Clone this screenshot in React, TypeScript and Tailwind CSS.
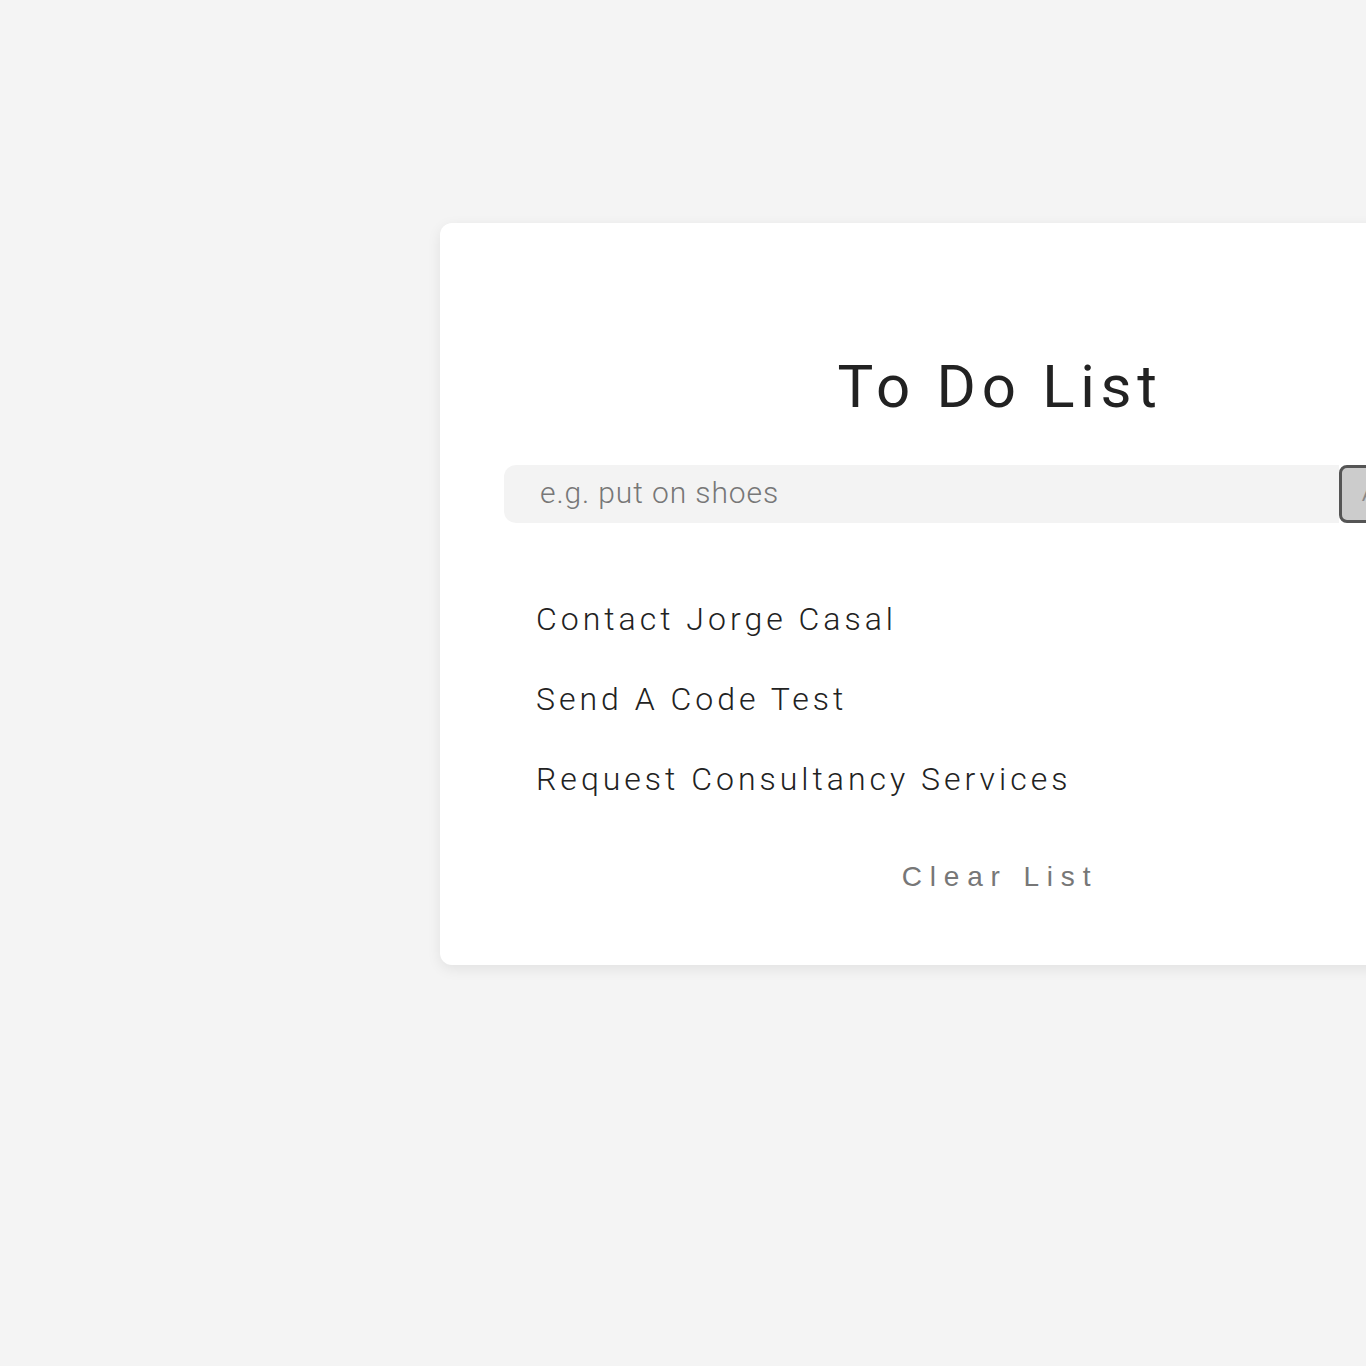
import { useState } from 'react'

const initialItems = ['Contact Jorge Casal', 'Send A Code Test', 'Request Consultancy Services']

export default function App() {
  const [items, setItems] = useState<string[]>(initialItems)
  const [text, setText] = useState('')

  const addItem = () => {
    if (!text.trim()) return
    setItems([...items, text.trim()])
    setText('')
  }

  return (
    <div className="min-h-screen overflow-hidden bg-[#f4f4f4] pl-[440px] pt-[223px] font-['Roboto',sans-serif]">
      <div className="flex w-[1120px] flex-col rounded-xl bg-white px-16 pt-[134px] pb-[74px] shadow-[0_4px_14px_rgba(0,0,0,0.08)]">
        <h1 className="text-center text-[60px] leading-none font-normal tracking-[0.095em] text-[#222]">To Do List</h1>

        <div className="mt-[48px] flex h-[58px]">
          <input
            value={text}
            onChange={(e) => setText(e.target.value)}
            onKeyDown={(e) => e.key === 'Enter' && addItem()}
            placeholder="e.g. put on shoes"
            className="h-full flex-1 rounded-l-xl bg-[#f3f3f3] px-9 pb-1 text-[30px] font-light tracking-[0.03em] text-[#333] outline-none placeholder:text-[#777]"
          />
          <button
            onClick={addItem}
            className="h-full w-[157px] rounded-lg border-[3px] border-[#555] bg-[#cccccc] pl-5 text-left font-['Liberation_Sans',sans-serif] text-[20px] text-[#888]"
          >
            Add
          </button>
        </div>

        <ul className="mt-[56px] px-8">
          {items.map((item) => (
            <li key={item} className="text-[32px] leading-[80px] font-light tracking-[0.125em] text-[#222]">
              {item}
            </li>
          ))}
        </ul>

        <button
          onClick={() => setItems([])}
          className="mx-auto mt-[44px] font-['Liberation_Sans',sans-serif] text-[28px] leading-none tracking-[0.28em] text-[#777]"
        >
          Clear List
        </button>
      </div>
    </div>
  )
}
